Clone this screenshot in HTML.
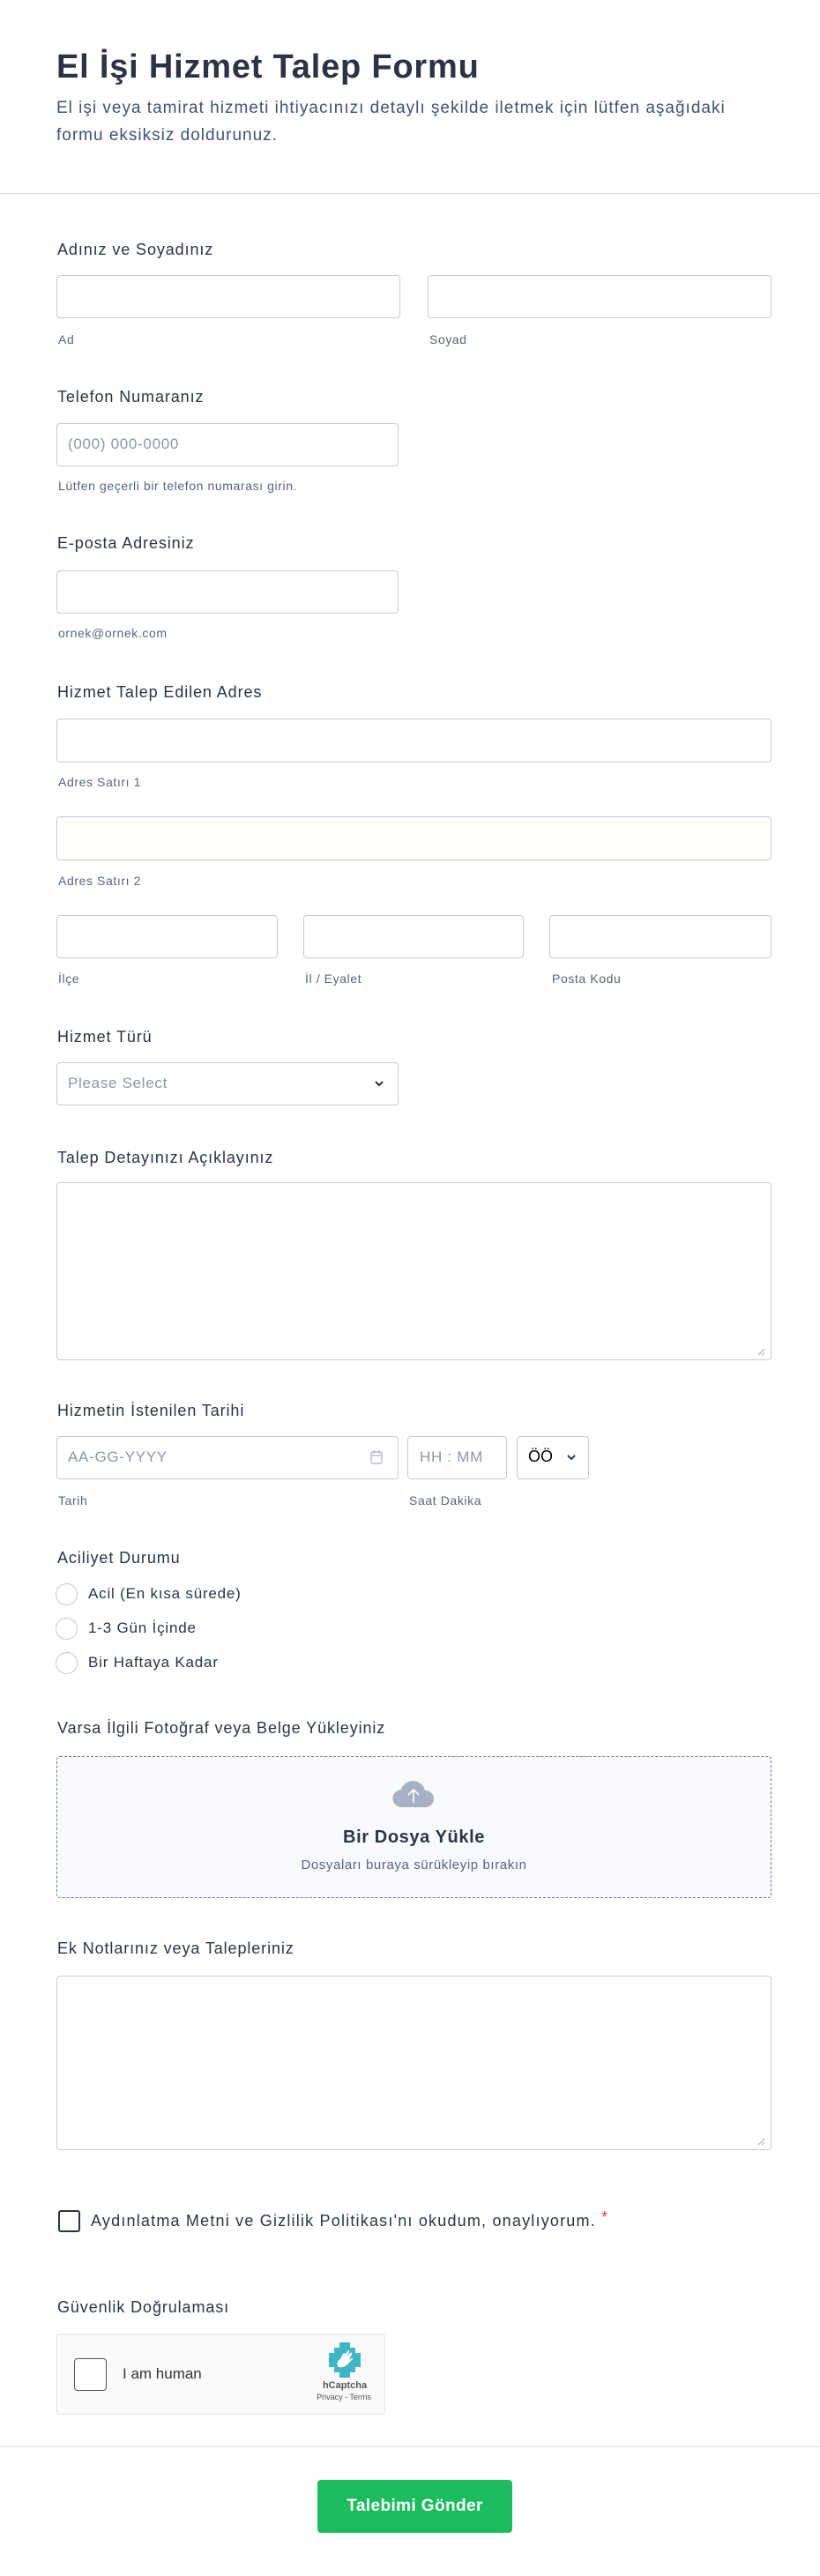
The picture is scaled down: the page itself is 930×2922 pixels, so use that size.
<!DOCTYPE html>
<html><head><meta charset="utf-8">
<style>
*{box-sizing:border-box;margin:0;padding:0}
body{width:930px;height:2922px;background:#fff;font-family:"Liberation Sans",sans-serif;color:#2c3345;position:relative;overflow:hidden}
.a{position:absolute}
.lbl{position:absolute;left:65px;font-size:18px;letter-spacing:0.9px;color:#2c3345;line-height:20px}
.sub{position:absolute;font-size:14px;letter-spacing:0.6px;color:#57647e;line-height:16px}
.in{position:absolute;border:1px solid #c3cad8;border-radius:4px;background:#fff}
.ph{position:absolute;font-size:17px;letter-spacing:0.7px;color:#8d96a8;line-height:20px}
.radio{position:absolute;left:63px;width:25px;height:25px;border:1.5px solid #c3cad8;border-radius:50%}
.rt{position:absolute;left:100px;font-size:17px;letter-spacing:0.8px;line-height:20px}
</style></head><body>
<div class="a" style="left:64px;top:54px;font-size:38px;letter-spacing:0.8px;font-weight:bold;line-height:44px">El İşi Hizmet Talep Formu</div>
<div class="a" style="left:64px;top:107px;font-size:19px;letter-spacing:1px;line-height:31px;color:#3f5273;width:860px">El işi veya tamirat hizmeti ihtiyacınızı detaylı şekilde iletmek için lütfen aşağıdaki<br>formu eksiksiz doldurunuz.</div>
<div class="a" style="left:0;top:219px;width:930px;height:1px;background:#dadee6"></div>

<div class="lbl" style="top:273px">Adınız ve Soyadınız</div>
<div class="in" style="left:64px;top:312px;width:390px;height:49px"></div>
<div class="in" style="left:485px;top:312px;width:390px;height:49px"></div>
<div class="sub" style="left:66px;top:377px">Ad</div>
<div class="sub" style="left:487px;top:377px">Soyad</div>

<div class="lbl" style="top:440px">Telefon Numaranız</div>
<div class="in" style="left:64px;top:480px;width:388px;height:49px"></div>
<div class="ph" style="left:77px;top:494px">(000) 000-0000</div>
<div class="sub" style="left:66px;top:543px">Lütfen geçerli bir telefon numarası girin.</div>

<div class="lbl" style="top:606px">E-posta Adresiniz</div>
<div class="in" style="left:64px;top:647px;width:388px;height:49px"></div>
<div class="sub" style="left:66px;top:710px">ornek@ornek.com</div>

<div class="lbl" style="top:775px">Hizmet Talep Edilen Adres</div>
<div class="in" style="left:64px;top:815px;width:811px;height:50px"></div>
<div class="sub" style="left:66px;top:879px">Adres Satırı 1</div>
<div class="in" style="left:64px;top:926px;width:811px;height:50px;background:#fffefa"></div>
<div class="sub" style="left:66px;top:991px">Adres Satırı 2</div>
<div class="in" style="left:64px;top:1038px;width:251px;height:49px"></div>
<div class="in" style="left:344px;top:1038px;width:250px;height:49px"></div>
<div class="in" style="left:623px;top:1038px;width:252px;height:49px"></div>
<div class="sub" style="left:66px;top:1102px">İlçe</div>
<div class="sub" style="left:346px;top:1102px">İl / Eyalet</div>
<div class="sub" style="left:626px;top:1102px">Posta Kodu</div>

<div class="lbl" style="top:1166px">Hizmet Türü</div>
<div class="in" style="left:64px;top:1205px;width:388px;height:49px"></div>
<div class="ph" style="left:77px;top:1219px">Please Select</div>
<svg class="a" style="left:424px;top:1224px" width="12" height="10" viewBox="0 0 12 10"><path d="M2 3l4 4 4-4" fill="none" stroke="#2c3345" stroke-width="2"/></svg>

<div class="lbl" style="top:1303px">Talep Detayınızı Açıklayınız</div>
<div class="in" style="left:64px;top:1341px;width:811px;height:202px"></div>
<svg class="a" style="left:858px;top:1528px" width="10" height="10"><path d="M9 2L2 9M9 6L6 9" stroke="#a0a8b8" stroke-width="1"/></svg>

<div class="lbl" style="top:1590px">Hizmetin İstenilen Tarihi</div>
<div class="in" style="left:64px;top:1629px;width:388px;height:49px"></div>
<div class="ph" style="left:77px;top:1643px">AA-GG-YYYY</div>
<svg class="a" style="left:419px;top:1644px" width="16" height="18" viewBox="0 0 16 18"><rect x="2" y="3" width="12" height="13" rx="2" fill="none" stroke="#b5bcc9" stroke-width="1.4"/><path d="M2 7h12M5 1v4M11 1v4" stroke="#b5bcc9" stroke-width="1.4"/></svg>
<div class="in" style="left:462px;top:1629px;width:113px;height:49px"></div>
<div class="ph" style="left:476px;top:1643px">HH : MM</div>
<div class="in" style="left:586px;top:1629px;width:82px;height:49px"></div>
<div class="a" style="left:599px;top:1642px;font-size:18px;color:#000">ÖÖ</div>
<svg class="a" style="left:642px;top:1648px" width="12" height="10" viewBox="0 0 12 10"><path d="M2 3l4 4 4-4" fill="none" stroke="#2c3345" stroke-width="2"/></svg>
<div class="sub" style="left:66px;top:1694px">Tarih</div>
<div class="sub" style="left:464px;top:1694px">Saat Dakika</div>

<div class="lbl" style="top:1757px">Aciliyet Durumu</div>
<div class="radio" style="top:1796px"></div><div class="rt" style="top:1798px">Acil (En kısa sürede)</div>
<div class="radio" style="top:1835px"></div><div class="rt" style="top:1837px">1-3 Gün İçinde</div>
<div class="radio" style="top:1874px"></div><div class="rt" style="top:1876px">Bir Haftaya Kadar</div>

<div class="lbl" style="top:1950px">Varsa İlgili Fotoğraf veya Belge Yükleyiniz</div>
<div class="a" style="left:64px;top:1992px;width:811px;height:161px;border:1px dashed #6f7a90;border-radius:4px;background:#f9fafe"></div>
<svg class="a" style="left:444px;top:2017px" width="50" height="34" viewBox="0 0 50 34"><path d="M12 33a10 10 0 0 1-1-20 14 14 0 0 1 27 1 9.5 9.5 0 0 1 1 19z" fill="#a8b1c3"/><path d="M25 28V13M19 19l6-6 6 6" fill="none" stroke="#fff" stroke-width="1.6"/></svg>
<div class="a" style="left:64px;top:2073px;width:811px;text-align:center;font-size:20px;letter-spacing:0.6px;font-weight:bold;color:#2c3345">Bir Dosya Yükle</div>
<div class="a" style="left:64px;top:2107px;width:811px;text-align:center;font-size:15px;letter-spacing:0.6px;color:#57647e">Dosyaları buraya sürükleyip bırakın</div>

<div class="lbl" style="top:2200px">Ek Notlarınız veya Talepleriniz</div>
<div class="in" style="left:64px;top:2241px;width:811px;height:198px"></div>
<svg class="a" style="left:858px;top:2424px" width="10" height="10"><path d="M9 2L2 9M9 6L6 9" stroke="#a0a8b8" stroke-width="1"/></svg>

<div class="a" style="left:66px;top:2507px;width:25px;height:25px;border:2px solid #2c3345;border-radius:3px"></div>
<div class="a" style="left:103px;top:2508px;font-size:18px;letter-spacing:1.2px;line-height:22px">Aydınlatma Metni ve Gizlilik Politikası'nı okudum, onaylıyorum. <span style="color:#f23a3c;position:relative;top:-4px">*</span></div>

<div class="lbl" style="top:2607px">Güvenlik Doğrulaması</div>
<div class="a" style="left:64px;top:2647px;width:373px;height:92px;border:1px solid #e0e0e0;border-radius:4px;background:#fafafa"></div>
<div class="a" style="left:84px;top:2675px;width:37px;height:37px;border:1px solid #555;border-radius:4px;background:#fff"></div>
<div class="a" style="left:139px;top:2683px;font-size:17px;color:#333">I am human</div>
<svg class="a" style="left:371px;top:2657px" width="40" height="40" viewBox="0 0 40 40"><path d="M14 0h12v6h6v6h6v16h-6v6h-6v6H14v-6H8v-6H2V12h6V6h6z" fill="#3fb5c5"/><path d="M13 28c-3-4-1-8 2-9l3-6c1-2 3-1 2 1l-2 4 5-8c1-2 3-1 2 1l-3 6 4-5c1-1 3 0 2 2l-4 6 3-2c2-1 3 1 1 2l-5 5c-3 3-7 4-10 3z" fill="#fff"/></svg>
<div class="a" style="left:358px;top:2700px;width:66px;text-align:center;font-size:11px;font-weight:bold;color:#555">hCaptcha</div>
<div class="a" style="left:350px;top:2714px;width:80px;text-align:center;font-size:9px;color:#555">Privacy - Terms</div>

<div class="a" style="left:0;top:2775px;width:930px;height:1px;background:#e4e7ee"></div>
<div class="a" style="left:360px;top:2813px;width:221px;height:60px;background:#1cbb5e;border-radius:4px;color:#fff;font-size:19px;letter-spacing:0.4px;font-weight:bold;text-align:center;line-height:60px">Talebimi Gönder</div>
</body></html>
